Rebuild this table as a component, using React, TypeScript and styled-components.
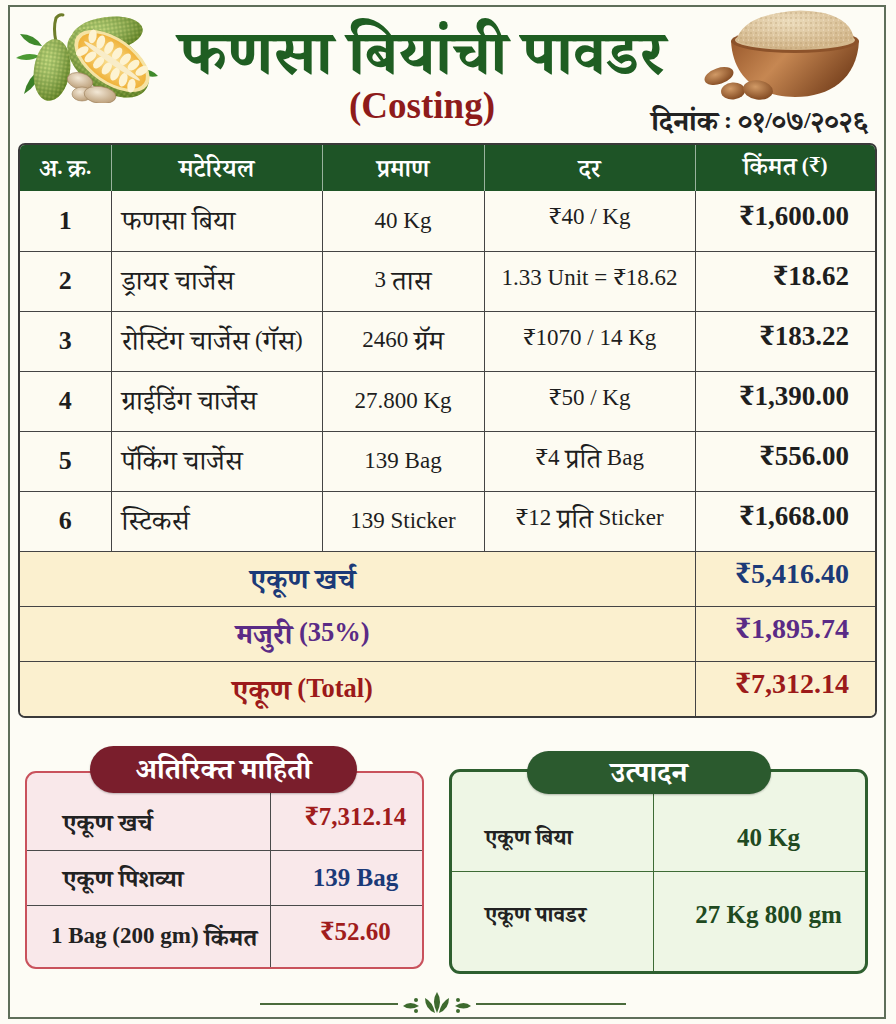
import styled, { createGlobalStyle } from 'styled-components'

const serif = `"Liberation Serif", "Noto Serif Devanagari", "Noto Sans Devanagari", "Lohit Devanagari", "Noto Sans", serif`

type Item = {
  no: number
  name: string
  qty: string
  rate: string
  cost: string
}

const items: Item[] = [
  { no: 1, name: 'फणसा बिया', qty: '40 Kg', rate: '₹40 / Kg', cost: '₹1,600.00' },
  { no: 2, name: 'ड्रायर चार्जेस', qty: '3 तास', rate: '1.33 Unit = ₹18.62', cost: '₹18.62' },
  { no: 3, name: 'रोस्टिंग चार्जेस (गॅस)', qty: '2460 ग्रॅम', rate: '₹1070 / 14 Kg', cost: '₹183.22' },
  { no: 4, name: 'ग्राईडिंग चार्जेस', qty: '27.800 Kg', rate: '₹50 / Kg', cost: '₹1,390.00' },
  { no: 5, name: 'पॅकिंग चार्जेस', qty: '139 Bag', rate: '₹4 प्रति Bag', cost: '₹556.00' },
  { no: 6, name: 'स्टिकर्स', qty: '139 Sticker', rate: '₹12 प्रति Sticker', cost: '₹1,668.00' },
]

const totals = [
  { label: 'एकूण खर्च', value: '₹5,416.40', tone: '#1b3a78' },
  { label: 'मजुरी (35%)', value: '₹1,895.74', tone: '#5a2b86' },
  { label: 'एकूण (Total)', value: '₹7,312.14', tone: '#9c1a1a' },
]

const extraInfo = [
  { label: 'एकूण खर्च', value: '₹7,312.14', tone: '#a01c1c', indent: 36, h: 58 },
  { label: 'एकूण पिशव्या', value: '139 Bag', tone: '#1b3a78', indent: 36, h: 55 },
  { label: '1 Bag (200 gm) किंमत', value: '₹52.60', tone: '#a01c1c', indent: 24, h: 61 },
]

const production = [
  { label: 'एकूण बिया', value: '40 Kg', h: 80, padTop: 12, padBottom: 0 },
  { label: 'एकूण पावडर', value: '27 Kg 800 gm', h: 99, padTop: 0, padBottom: 14 },
]

// Devanagari runs get their own span so the fallback script can be sized up
const devaRun = /([\u0900-\u097F]+(?:\s+[\u0900-\u097F]+)*)/

const Txt = ({ children }: { children: string }) => (
  <span>
    {children.split(devaRun).map((part, i) => (i % 2 === 1 ? <Deva key={i}>{part}</Deva> : part))}
  </span>
)

// leaf path from base to tip, w = half width
const leaf = (bx: number, by: number, tx: number, ty: number, w: number) => {
  const mx = (bx + tx) / 2
  const my = (by + ty) / 2
  const dx = tx - bx
  const dy = ty - by
  const len = Math.hypot(dx, dy)
  const nx = (-dy / len) * w
  const ny = (dx / len) * w
  return `M${bx} ${by} Q${mx + nx} ${my + ny} ${tx} ${ty} Q${mx - nx} ${my - ny} ${bx} ${by}Z`
}

const JackfruitArt = () => (
  <svg width="150" height="95" viewBox="0 0 150 95">
    <defs>
      <pattern id="rind" width="4" height="4" patternUnits="userSpaceOnUse">
        <rect width="4" height="4" fill="#8db43c" />
        <circle cx="1" cy="1" r="0.9" fill="#c7d860" />
        <circle cx="3" cy="3" r="0.8" fill="#6f9427" />
      </pattern>
      <radialGradient id="shade" cx="0.35" cy="0.35" r="0.7">
        <stop offset="0" stopColor="#fff" stopOpacity="0.25" />
        <stop offset="1" stopColor="#2f4a10" stopOpacity="0.45" />
      </radialGradient>
      <radialGradient id="flesh" cx="0.5" cy="0.5" r="0.6">
        <stop offset="0" stopColor="#fbe6a0" />
        <stop offset="1" stopColor="#eda826" />
      </radialGradient>
      <radialGradient id="seedGrad" cx="0.4" cy="0.35" r="0.7">
        <stop offset="0" stopColor="#f3e8d6" />
        <stop offset="1" stopColor="#b89a73" />
      </radialGradient>
    </defs>
    <path d={leaf(30, 38, 8, 26, 7)} fill="#3f8a2c" />
    <path d={leaf(28, 48, 4, 50, 6)} fill="#4c9a33" />
    <path d={leaf(30, 60, 12, 86, 7)} fill="#3a7f27" />
    <path d={leaf(126, 62, 146, 68, 6)} fill="#3f8a2c" />
    <path d="M44 34 Q41 20 44 10 Q47 6 51 7" stroke="#6e7d2a" strokeWidth="3" fill="none" strokeLinecap="round" />
    <ellipse cx="95" cy="26" rx="36" ry="17" transform="rotate(-8 95 26)" fill="url(#rind)" />
    <ellipse cx="95" cy="26" rx="36" ry="17" transform="rotate(-8 95 26)" fill="url(#shade)" />
    <ellipse cx="40" cy="62" rx="18" ry="31" transform="rotate(8 40 62)" fill="url(#rind)" />
    <ellipse cx="40" cy="62" rx="18" ry="31" transform="rotate(8 40 62)" fill="url(#shade)" />
    <g transform="rotate(35 100 53)">
      <ellipse cx="98" cy="57" rx="46" ry="27" fill="url(#rind)" />
      <ellipse cx="98" cy="57" rx="46" ry="27" fill="url(#shade)" />
      <ellipse cx="100" cy="53" rx="43" ry="23" fill="#f5e3a4" />
      <ellipse cx="100" cy="53" rx="39" ry="20" fill="url(#flesh)" />
      {[-30, -20, -10, 0, 10, 20, 30].map((x) => (
        <g key={x}>
          <ellipse cx={100 + x} cy="44" rx="4" ry="7" fill="#fdf3d2" transform={`rotate(${x * 0.8} ${100 + x} 44)`} />
          <ellipse cx={100 + x} cy="62" rx="4" ry="7" fill="#fdf3d2" transform={`rotate(${-x * 0.8} ${100 + x} 62)`} />
        </g>
      ))}
      <ellipse cx="100" cy="53" rx="34" ry="3" fill="#f8ecc8" />
    </g>
    <ellipse cx="68" cy="73" rx="13" ry="8" transform="rotate(15 68 73)" fill="url(#seedGrad)" stroke="#9c7f5a" strokeWidth="0.6" />
    <ellipse cx="70" cy="86" rx="10" ry="7" fill="url(#seedGrad)" stroke="#9c7f5a" strokeWidth="0.6" />
    <ellipse cx="88" cy="87" rx="16" ry="8.5" transform="rotate(8 88 87)" fill="url(#seedGrad)" stroke="#9c7f5a" strokeWidth="0.6" />
  </svg>
)

const BowlArt = () => (
  <svg width="160" height="95" viewBox="0 0 160 95">
    <defs>
      <linearGradient id="wood" x1="0" y1="0" x2="1" y2="0.4">
        <stop offset="0" stopColor="#9a5a2d" />
        <stop offset="0.45" stopColor="#c68752" />
        <stop offset="1" stopColor="#7d4621" />
      </linearGradient>
      <radialGradient id="powder" cx="0.45" cy="0.3" r="0.8">
        <stop offset="0" stopColor="#ecdcbc" />
        <stop offset="1" stopColor="#cdae80" />
      </radialGradient>
      <pattern id="grain" width="5" height="5" patternUnits="userSpaceOnUse">
        <circle cx="1" cy="1" r="0.8" fill="#a98a5c" opacity="0.6" />
        <circle cx="3.5" cy="3" r="0.6" fill="#fff6e4" opacity="0.7" />
      </pattern>
      <radialGradient id="nut" cx="0.4" cy="0.35" r="0.7">
        <stop offset="0" stopColor="#d19a66" />
        <stop offset="1" stopColor="#80471f" />
      </radialGradient>
    </defs>
    <path d="M31 34 C33 72 60 90 95 90 C130 90 157 72 159 34 Z" fill="url(#wood)" />
    <ellipse cx="95" cy="34" rx="64" ry="12" fill="#8c522a" />
    <ellipse cx="95" cy="33" rx="60" ry="10" fill="url(#powder)" />
    <path d="M36 34 Q42 12 78 6 Q100 1 124 6 Q152 13 154 33 Q120 42 95 42 Q60 42 36 34Z" fill="url(#powder)" />
    <path d="M36 34 Q42 12 78 6 Q100 1 124 6 Q152 13 154 33 Q120 42 95 42 Q60 42 36 34Z" fill="url(#grain)" />
    <ellipse cx="19" cy="69" rx="15" ry="8" transform="rotate(-18 19 69)" fill="url(#nut)" />
    <ellipse cx="33" cy="84" rx="12" ry="8.5" transform="rotate(-5 33 84)" fill="url(#nut)" />
    <ellipse cx="58" cy="83" rx="15" ry="9.5" transform="rotate(8 58 83)" fill="url(#nut)" />
  </svg>
)

const Ornament = () => (
  <svg width="78" height="26" viewBox="0 0 78 26">
    <g fill="#3d6a2e">
      <path d="M39 1 Q45 10 39 22 Q33 10 39 1Z" />
      <path d="M37 22 Q27 18 27 7 Q35 11 37 22Z" />
      <path d="M41 22 Q51 18 51 7 Q43 11 41 22Z" />
      <path d="M5 15 Q12 9 21 15 Q12 20 5 15Z" />
      <circle cx="18" cy="9" r="2" />
      <circle cx="18" cy="20" r="2" />
      <path d="M73 15 Q66 9 57 15 Q66 20 73 15Z" />
      <circle cx="60" cy="9" r="2" />
      <circle cx="60" cy="20" r="2" />
    </g>
  </svg>
)

export default function App() {
  return (
    <>
      <GlobalStyle />
      <Page>
        <Frame>
          <Header>
            <LeftArt>
              <JackfruitArt />
            </LeftArt>
            <Title>
              <Txt>फणसा बियांची पावडर</Txt>
            </Title>
            <Subtitle>(Costing)</Subtitle>
            <RightArt>
              <BowlArt />
            </RightArt>
            <DateText>
              <Txt>दिनांक : ०१/०७/२०२६</Txt>
            </DateText>
          </Header>

          <TableWrap>
            <CostTable>
              <colgroup>
                <col style={{ width: 91 }} />
                <col style={{ width: 211 }} />
                <col style={{ width: 162 }} />
                <col style={{ width: 211 }} />
                <col />
              </colgroup>
              <thead>
                <tr>
                  {['अ. क्र.', 'मटेरियल', 'प्रमाण', 'दर', 'किंमत (₹)'].map((h) => (
                    <HeadCell key={h}>
                      <Txt>{h}</Txt>
                    </HeadCell>
                  ))}
                </tr>
              </thead>
              <tbody>
                {items.map((item) => (
                  <ItemRow key={item.no}>
                    <NoCell>{item.no}</NoCell>
                    <NameCell>
                      <Txt>{item.name}</Txt>
                    </NameCell>
                    <TextCell>
                      <Txt>{item.qty}</Txt>
                    </TextCell>
                    <TextCell>
                      <Txt>{item.rate}</Txt>
                    </TextCell>
                    <CostCell>{item.cost}</CostCell>
                  </ItemRow>
                ))}
                {totals.map((t) => (
                  <TotalRow key={t.label}>
                    <TotalLabel colSpan={4} $tone={t.tone}>
                      <Txt>{t.label}</Txt>
                    </TotalLabel>
                    <TotalValue $tone={t.tone}>{t.value}</TotalValue>
                  </TotalRow>
                ))}
              </tbody>
            </CostTable>
          </TableWrap>

          <Cards>
            <CardSlot $offset={25}>
              <InfoCard $border="#c9525c" $bg="#f9e8ea" $width={2} $split={243}>
                <CardTab $bg="#7a1e2c" $top={-27} $left={63} $w={267} $h={47}>
                  <Txt>अतिरिक्त माहिती</Txt>
                </CardTab>
                {extraInfo.map((row, i) => (
                  <InfoRow
                    key={row.label}
                    $h={row.h}
                    $padTop={0}
                    $padBottom={0}
                    $line="#4a4a4a"
                    $last={i === extraInfo.length - 1}
                  >
                    <InfoLabel $indent={row.indent} $size={23} $scale={1.06}>
                      <Txt>{row.label}</Txt>
                    </InfoLabel>
                    <InfoValue $tone={row.tone} $line="#4a4a4a">
                      {row.value}
                    </InfoValue>
                  </InfoRow>
                ))}
              </InfoCard>
            </CardSlot>
            <CardSlot $offset={23}>
              <InfoCard $border="#2e5f2f" $bg="#eef6e5" $width={3} $split={201}>
                <CardTab $bg="#2b5a2e" $top={-21} $left={75} $w={244} $h={43}>
                  <Txt>उत्पादन</Txt>
                </CardTab>
                {production.map((row, i) => (
                  <InfoRow
                    key={row.label}
                    $h={row.h}
                    $padTop={row.padTop}
                    $padBottom={row.padBottom}
                    $line="#3d6b35"
                    $last={i === production.length - 1}
                  >
                    <InfoLabel $indent={33} $size={18.5} $scale={1.2}>
                      <Txt>{row.label}</Txt>
                    </InfoLabel>
                    <InfoValue $tone="#1f4a21" $line="#3d6b35">
                      {row.value}
                    </InfoValue>
                  </InfoRow>
                ))}
              </InfoCard>
            </CardSlot>
          </Cards>

          <Divider>
            <Rule $w={138} />
            <Ornament />
            <Rule $w={150} />
          </Divider>
        </Frame>
      </Page>
    </>
  )
}

const GlobalStyle = createGlobalStyle`
  html, body {
    margin: 0;
    padding: 0;
    background: #fdfcf5;
  }
  * {
    box-sizing: border-box;
  }
`

const Deva = styled.span`
  font-size: calc(var(--deva-scale, 1.2) * 1em);
  vertical-align: -0.12em;
  line-height: 1;
`

const Page = styled.div`
  width: 896px;
  height: 1024px;
  padding: 5px 10px 5px 8px;
  background: #fdfcf5;
  font-family: ${serif};
  color: #1e1e1e;
`

const Frame = styled.div`
  height: 100%;
  border: 2px solid #5f6f5a;
  display: flex;
  flex-direction: column;
`

const Header = styled.header`
  height: 136px;
  display: grid;
  grid-template-columns: 150px 1fr 200px;
  grid-template-rows: 78px 58px;
`

const LeftArt = styled.div`
  grid-column: 1;
  grid-row: 1 / 3;
  padding: 1px 0 0 2px;
`

const RightArt = styled.div`
  grid-column: 3;
  grid-row: 1;
  justify-self: end;
  margin-right: 24px;
`

const Title = styled.h1`
  grid-column: 2;
  grid-row: 1;
  margin: 0;
  align-self: end;
  text-align: center;
  font-size: 52px;
  line-height: 1;
  font-weight: 700;
  color: #1f5e22;
  white-space: nowrap;
`

const Subtitle = styled.div`
  grid-column: 2;
  grid-row: 2;
  text-align: center;
  font-size: 37px;
  line-height: 1.1;
  font-weight: 700;
  color: #8e1b1b;
  padding-top: 1px;
`

const DateText = styled.div`
  grid-column: 2 / 4;
  grid-row: 2;
  justify-self: end;
  align-self: end;
  margin: 0 16px 7px 0;
  font-size: 24px;
  line-height: 1;
  font-weight: 700;
  color: #222;
`

const TableWrap = styled.div`
  margin: 0 7px 0 8px;
  border: 2px solid #3a3a3a;
  border-radius: 7px;
  overflow: hidden;
`

const CostTable = styled.table`
  width: 100%;
  border-collapse: collapse;
  table-layout: fixed;
`

const HeadCell = styled.th`
  height: 46px;
  padding: 0;
  background: #1e5426;
  color: #fff;
  font-size: 21px;
  font-weight: 600;
  text-align: center;
  border-right: 1px solid rgba(255, 255, 255, 0.55);
  &:last-child {
    border-right: none;
  }
`

const ItemRow = styled.tr`
  height: 60px;
  background: #fdfbf2;
  td {
    border-right: 1.5px solid #444;
    border-bottom: 1.5px solid #444;
  }
  td:last-child {
    border-right: none;
  }
`

const NoCell = styled.td`
  text-align: center;
  font-size: 26px;
  font-weight: 700;
`

const NameCell = styled.td`
  padding-left: 10px;
  font-size: 23px;
  white-space: nowrap;
`

const TextCell = styled.td`
  text-align: center;
  font-size: 23px;
  white-space: nowrap;
`

const CostCell = styled.td`
  text-align: right;
  padding-right: 26px;
  font-size: 27px;
  font-weight: 700;
`

const TotalRow = styled.tr`
  height: 55px;
  background: #fbf0cf;
  td {
    border-bottom: 1.5px solid #444;
  }
  &:last-child td {
    border-bottom: none;
  }
`

const TotalLabel = styled.td<{ $tone: string }>`
  --deva-scale: 1.08;
  text-align: center;
  padding-right: 110px;
  font-size: 26.5px;
  font-weight: 700;
  color: ${({ $tone }) => $tone};
  border-right: 1.5px solid #444;
`

const TotalValue = styled.td<{ $tone: string }>`
  text-align: right;
  padding-right: 26px;
  font-size: 28px;
  font-weight: 700;
  color: ${({ $tone }) => $tone};
`

const Cards = styled.div`
  display: grid;
  grid-template-columns: 399px 419px;
  gap: 25px;
  padding: 0 0 0 15px;
  margin-top: 28px;
  align-items: start;
`

const CardSlot = styled.div<{ $offset: number }>`
  padding-top: ${({ $offset }) => $offset}px;
`

const InfoCard = styled.div<{ $border: string; $bg: string; $width: number; $split: number }>`
  position: relative;
  border: ${({ $width, $border }) => `${$width}px solid ${$border}`};
  border-radius: 11px;
  background: ${({ $bg }) => $bg};
  padding-top: 20px;
  --split: ${({ $split }) => $split}px;
`

const CardTab = styled.div<{ $bg: string; $top: number; $left: number; $w: number; $h: number }>`
  position: absolute;
  top: ${({ $top }) => $top}px;
  left: ${({ $left }) => $left}px;
  width: ${({ $w }) => $w}px;
  height: ${({ $h }) => $h}px;
  border-radius: ${({ $h }) => $h / 2}px;
  background: ${({ $bg }) => $bg};
  color: #fff;
  font-size: 24px;
  font-weight: 700;
  display: flex;
  align-items: center;
  justify-content: center;
  box-shadow: 0 1px 2px rgba(0, 0, 0, 0.25);
`

const InfoRow = styled.div<{ $h: number; $padTop: number; $padBottom: number; $line: string; $last: boolean }>`
  display: grid;
  grid-template-columns: var(--split) 1fr;
  height: ${({ $h }) => $h}px;
  border-bottom: ${({ $last, $line }) => ($last ? 'none' : `1.5px solid ${$line}`)};
  > div {
    padding-top: ${({ $padTop }) => $padTop}px;
    padding-bottom: ${({ $padBottom }) => $padBottom}px;
  }
`

const InfoLabel = styled.div<{ $indent: number; $size: number; $scale: number }>`
  --deva-scale: ${({ $scale }) => $scale};
  display: flex;
  align-items: center;
  padding-left: ${({ $indent }) => $indent}px;
  font-size: ${({ $size }) => $size}px;
  font-weight: 700;
  color: #222;
  white-space: nowrap;
`

const InfoValue = styled.div<{ $tone: string; $line: string }>`
  display: flex;
  align-items: center;
  justify-content: center;
  padding-left: 18px;
  border-left: 1.5px solid ${({ $line }) => $line};
  font-size: 25px;
  font-weight: 700;
  color: ${({ $tone }) => $tone};
`

const Divider = styled.div`
  display: flex;
  align-items: center;
  justify-content: center;
  margin-top: 17px;
  padding-right: 8px;
`

const Rule = styled.div<{ $w: number }>`
  width: ${({ $w }) => $w}px;
  height: 2px;
  background: #4a6b3c;
`
